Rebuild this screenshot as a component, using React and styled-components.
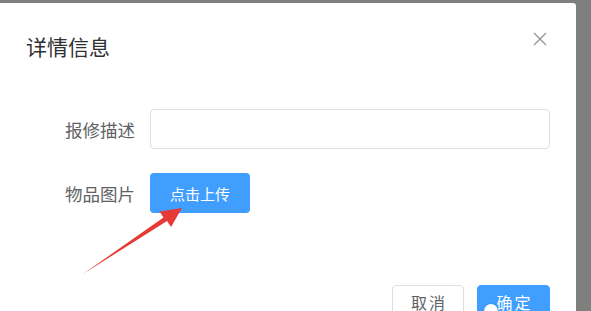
import { styled, createGlobalStyle } from "styled-components";

const GlobalStyle = createGlobalStyle`
  html, body {
    margin: 0;
    padding: 0;
    background: #7f7f7f;
    overflow: hidden;
  }
  body {
    font-family: "Noto Sans CJK SC", "Liberation Sans", sans-serif;
  }
`;

const App = () => {
  return (
    <>
      <GlobalStyle />
      <Dialog>
        <Header>
          <Title>详情信息</Title>
          <CloseButton aria-label="close">
            <svg width="14" height="14" viewBox="0 0 14 14">
              <path
                d="M1 1 L13 13 M13 1 L1 13"
                stroke="#909399"
                strokeWidth="1.3"
                fill="none"
              />
            </svg>
          </CloseButton>
        </Header>
        <Body>
          <FormRow>
            <Label>报修描述</Label>
            <Input type="text" />
          </FormRow>
          <FormRow>
            <Label>物品图片</Label>
            <UploadButton>点击上传</UploadButton>
          </FormRow>
        </Body>
        <Footer>
          <FooterButton>取消</FooterButton>
          <FooterButton $primary>确定</FooterButton>
        </Footer>
        <Arrow viewBox="60 195 130 90" width="130" height="90">
          <polygon
            points="83,274 163.5,217.5 159.5,211.5 182,208 171,227 167,221"
            fill="#e53a35"
          />
        </Arrow>
      </Dialog>
    </>
  );
};
export default App;

const Dialog = styled.div`
  position: relative;
  box-sizing: border-box;
  margin-top: 3px;
  width: 576px;
  height: 308px;
  background: #ffffff;
  border-top-right-radius: 3px;
  display: flex;
  flex-direction: column;
`;
const Header = styled.div`
  display: flex;
  justify-content: space-between;
  align-items: flex-start;
  padding: 29px 29px 0 26px;
`;
const Title = styled.span`
  font-size: 21px;
  line-height: 28px;
  color: #303133;
`;
const CloseButton = styled.button`
  border: 0;
  background: transparent;
  padding: 0;
  width: 14px;
  height: 14px;
  display: flex;
`;
const Body = styled.div`
  display: flex;
  flex-direction: column;
  gap: 24px;
  padding: 49px 0 0 15px;
`;
const FormRow = styled.div`
  display: flex;
  align-items: center;
  height: 40px;
`;
const Label = styled.label`
  width: 120px;
  margin-right: 15px;
  text-align: right;
  font-size: 17.5px;
  color: #606266;
`;
const Input = styled.input`
  box-sizing: border-box;
  width: 400px;
  height: 40px;
  border: 1px solid #dcdfe6;
  border-radius: 4px;
  outline: none;
`;
const UploadButton = styled.button`
  box-sizing: border-box;
  width: 100px;
  height: 40px;
  border: 0;
  border-radius: 4px;
  background: #409eff;
  color: #ffffff;
  font-family: inherit;
  font-size: 15px;
`;
const Footer = styled.div`
  display: flex;
  justify-content: flex-end;
  gap: 13px;
  padding: 72px 26px 0 0;
`;
const FooterButton = styled.button`
  position: relative;
  box-sizing: border-box;
  width: ${(props) => (props.$primary ? "73px" : "72px")};
  height: 40px;
  padding: 5px 0 0;
  align-self: flex-start;
  display: flex;
  justify-content: center;
  border: 1px solid ${(props) => (props.$primary ? "#409eff" : "#dcdfe6")};
  border-radius: 4px;
  background: ${(props) => (props.$primary ? "#409eff" : "#ffffff")};
  color: ${(props) => (props.$primary ? "#ffffff" : "#606266")};
  font-family: inherit;
  font-size: 16px;
  line-height: 22px;
  letter-spacing: 2px;
  text-indent: 2px;
  &::after {
    content: ${(props) => (props.$primary ? '""' : "none")};
    position: absolute;
    left: 6px;
    top: 18px;
    width: 14px;
    height: 14px;
    border-radius: 50%;
    background: #ffffff;
    box-shadow: 0 0 2px rgba(0, 0, 0, 0.25);
  }
`;
const Arrow = styled.svg`
  position: absolute;
  left: 60px;
  top: 192px;
`;
